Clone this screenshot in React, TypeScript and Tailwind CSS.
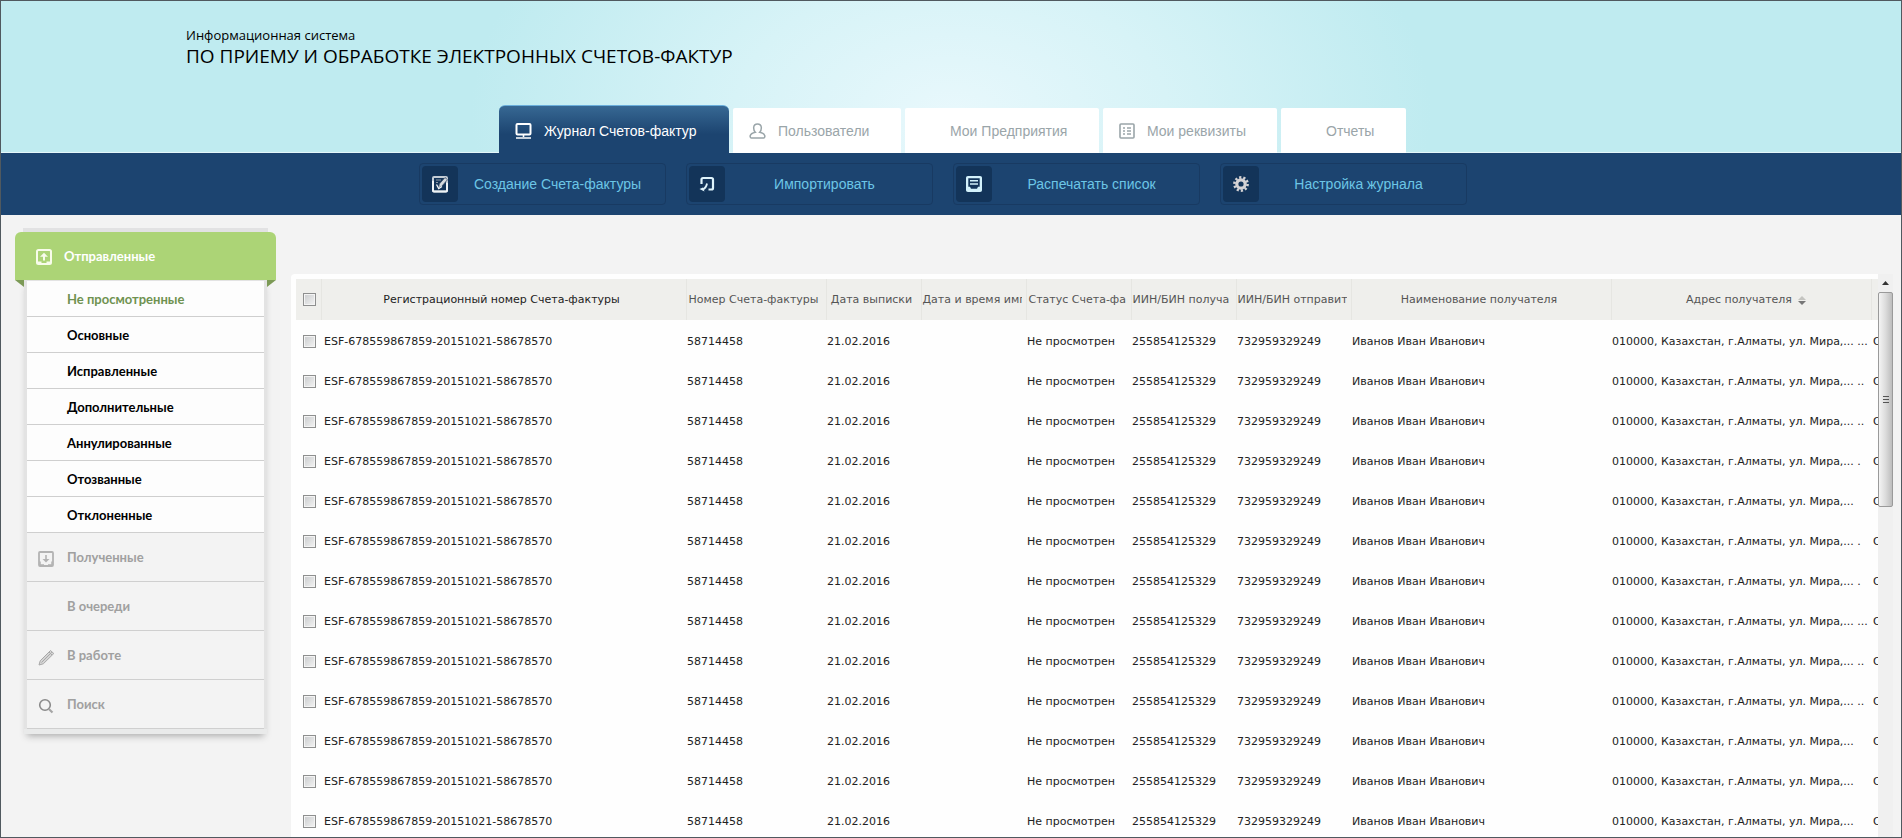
import type { ReactNode } from 'react'

interface Tab {
  label: string
  className: string
  icon?: ReactNode
}

interface Action {
  label: string
  icon: ReactNode
}

/* ---------- icons ---------- */

function MonitorIcon() {
  return (
    <svg viewBox="0 0 17 16" className="w-[17px] h-4 shrink-0" fill="none" stroke="currentColor">
      <rect x="1.5" y="1" width="14" height="10.5" rx="1" strokeWidth="2" />
      <path d="M8.5 12v2M1 15h15" strokeWidth="1.6" />
    </svg>
  )
}

function UserIcon() {
  return (
    <svg viewBox="0 0 17 16" className="w-[17px] h-4 shrink-0" fill="none" stroke="currentColor" strokeWidth="1.5">
      <path d="M6.3 9.2C5 8 4.6 6 4.7 4.3 4.9 2.2 6.4 1 8.500 1s3.600 1.200 3.800 3.300C12.400 6 12 8 10.700 9.200c2.300.5 4.500 1 5.100 3.500.2 1-.2 2.300-1.300 2.300H2.500c-1.100 0-1.500-1.300-1.300-2.300C1.800 10.200 4 9.700 6.300 9.200z" />
    </svg>
  )
}

function ListIcon() {
  return (
    <svg viewBox="0 0 16 16" className="size-4 shrink-0" fill="none" stroke="currentColor">
      <rect x="1" y="1" width="14" height="14" rx="1" strokeWidth="1.6" />
      <path d="M4 5h2M4 8h2M4 11h2M8 5h4M8 8h4M8 11h4" strokeWidth="1.7" />
    </svg>
  )
}

function EditIcon() {
  return (
    <svg viewBox="0 0 18 18" className="size-[18px]" fill="none">
      <rect x="2" y="2" width="14" height="14.500" rx="1" stroke="#c3ccd5" strokeWidth="2" />
      <path d="M2 6v9.500c0 .7.300 1 1 1h12c.7 0 1-.3 1-1V8" stroke="#eef3f6" strokeWidth="2" />
      <path d="M5 5h5M5 7.500h2" stroke="#8b98a6" />
      <path d="M7.500 13l.8-4L14 2.500l2.500 2.200L10.500 11.500z" fill="#d5dade" stroke="#3d5069" strokeWidth=".8" />
      <path d="M5.500 9.500l2.200 4 3.300-2" stroke="#eef3f6" strokeWidth="1.300" />
    </svg>
  )
}

function ImportIcon() {
  return (
    <svg viewBox="0 0 16 16" className="size-4" fill="none" stroke="#dff4fc" strokeWidth="2.200">
      <path d="M2.500 8V3.500Q2.500 2 4 2h8.500Q14 2 14 3.500V12q0 1.500-1.500 1.500H9.500" />
      <path d="M8 7.500C7.500 10.500 6 12.500 3.500 13.500" strokeWidth="1.800" />
      <path d="M0.500 13l3.500-1.500 1.500 4z" fill="#dff4fc" stroke="none" />
    </svg>
  )
}

function PrintIcon() {
  return (
    <svg viewBox="0 0 16 16" className="size-4">
      <path d="M2 0h12c1.300 0 2 .7 2 2v12c0 1.300-.7 2-2 2H2c-1.300 0-2-.7-2-2V2C0 .7.700 0 2 0z" fill="#d3f1fb" />
      <path d="M2.300 2.300h11.400v8.400h-1.700l-1 2h-6l-1-2H2.300z" fill="#133459" />
      <path d="M4 4.700h8M4 8h8" stroke="#d3f1fb" strokeWidth="1.600" />
    </svg>
  )
}

function GearIcon() {
  return (
    <svg viewBox="0 0 18 18" className="size-[18px]" fill="none" stroke="#d4d2d4">
      <circle cx="9" cy="9" r="4.200" strokeWidth="3.200" />
      <circle cx="9" cy="9" r="6.600" strokeWidth="2.600" strokeDasharray="2.200 1.947" />
    </svg>
  )
}

function OutboxIcon() {
  return (
    <svg viewBox="0 0 16 16" className="size-4" fill="none" stroke="#f8fceb">
      <rect x="1" y="1" width="14" height="14" rx="1.500" strokeWidth="2" />
      <path d="M8 11.500V6.500" strokeWidth="2" />
      <path d="M4 7.800L8 3.800l4 4z" fill="#f8fceb" stroke="none" />
      <path d="M2 13.500h3.500M10.500 13.500H14" strokeWidth="2" />
    </svg>
  )
}

function InboxIcon() {
  return (
    <svg viewBox="0 0 16 16" className="size-4" fill="none" stroke="#b3b3b3">
      <rect x="1" y="1" width="14" height="14" rx="1" strokeWidth="1.800" />
      <path d="M8 4v4.500" strokeWidth="1.600" />
      <path d="M4.500 8h7L8 11.500z" fill="#b3b3b3" stroke="none" />
      <path d="M2 10.500V14h4M14 10.500V14h-4" strokeWidth="1.500" />
    </svg>
  )
}

function PencilIcon() {
  return (
    <svg viewBox="0 0 17 17" className="size-[17px]" fill="none" stroke="#a8a8a8">
      <path d="M1 16l1.200-4.200L12.500 1.500 15.800 4.500 5.300 14.800z" fill="#d5d5d5" />
      <path d="M3.500 13.500L13.800 3.200" />
      <path d="M11 3l3 3" />
    </svg>
  )
}

function SearchIcon() {
  return (
    <svg viewBox="0 0 16 16" className="size-4" fill="none" stroke="#8a8a8a">
      <circle cx="7" cy="7" r="5.300" strokeWidth="1.600" />
      <path d="M10.800 11L14.500 14.500" stroke="#a5a5a5" strokeWidth="2.200" />
    </svg>
  )
}

/* ---------- data ---------- */

const tabs: Tab[] = [
  { label: 'Пользователи', className: 'w-[168px] pl-4', icon: <UserIcon /> },
  { label: 'Мои Предприятия', className: 'w-[194px] pl-[45px]' },
  { label: 'Мои реквизиты', className: 'w-[174px] pl-4', icon: <ListIcon /> },
  { label: 'Отчеты', className: 'w-[125px] pl-[45px]' },
]

const actions: Action[] = [
  { label: 'Создание Счета-фактуры', icon: <EditIcon /> },
  { label: 'Импортировать', icon: <ImportIcon /> },
  { label: 'Распечатать список', icon: <PrintIcon /> },
  { label: 'Настройка журнала', icon: <GearIcon /> },
]

const folders = [
  'Не просмотренные',
  'Основные',
  'Исправленные',
  'Дополнительные',
  'Аннулированные',
  'Отозванные',
  'Отклоненные',
]

const sections: { label: string; icon?: ReactNode }[] = [
  { label: 'Полученные', icon: <InboxIcon /> },
  { label: 'В очереди' },
  { label: 'В работе', icon: <PencilIcon /> },
  { label: 'Поиск', icon: <SearchIcon /> },
]

// long titles are stored already cut to their column
const columns = [
  { title: 'Регистрационный номер Счета-фактуры', className: '', head: 'text-center text-[#222]' },
  { title: 'Номер Счета-фактуры', className: 'w-[140px]', head: 'pl-0.5' },
  { title: 'Дата выписки', className: 'w-[95px]', head: 'text-center' },
  { title: 'Дата и время имп', className: 'w-[105px]', head: 'pl-px' },
  { title: 'Статус Счета-фа', className: 'w-[105px]', head: 'pl-0.5' },
  { title: 'ИИН/БИН получа', className: 'w-[105px]', head: 'pl-px' },
  { title: 'ИИН/БИН отправит', className: 'w-[115px]', head: 'pl-px' },
  { title: 'Наименование получателя', className: 'w-[260px]', head: 'text-center' },
  { title: 'Адрес получателя', className: 'w-[260px]', head: 'text-center pl-3.5' },
]

// what is left of the street line after the ellipsis, one per row
const tails = ['...', '..', '..', '.', '', '.', '.', '...', '..', '..', '', '', '']

/* ---------- parts ---------- */

function Header() {
  return (
    <header className="shrink-0 font-['Liberation_Sans',sans-serif] text-sm">
      <div className="h-[152px] flex flex-col justify-between bg-[#bfebf0] bg-[radial-gradient(ellipse_480px_300px_at_50%_75%,#e8f8fc_0%,#d7f3f7_45%,#bfebf0_100%)] border-b border-[#e4f7fa]">
        <div className="pl-[185px] pt-[25px] font-['Open_Sans','Noto_Sans',sans-serif] text-black">
          <p className="text-[13px] leading-[18px]">Информационная система</p>
          <h1 className="text-[19px] leading-6">ПО ПРИЕМУ И ОБРАБОТКЕ ЭЛЕКТРОННЫХ СЧЕТОВ-ФАКТУР</h1>
        </div>
        <nav className="flex justify-center items-end gap-1 pl-[3px] -mb-px">
          <a
            href="#journal"
            className="w-[230px] h-12 pl-4 pt-0.5 flex items-center gap-3 rounded-t-md border-t border-[#6aaedb] bg-linear-to-b from-[#376893] to-[#1c4470] to-60% text-white"
          >
            <MonitorIcon />
            Журнал Счетов-фактур
          </a>
          {tabs.map(tab => (
            <a
              key={tab.label}
              href="#tab"
              className={`${tab.className} h-[45px] flex items-center gap-3 rounded-t-xs bg-white text-[#9aa5a9]`}
            >
              {tab.icon}
              {tab.label}
            </a>
          ))}
        </nav>
      </div>

      <div className="h-[62px] flex items-center justify-center gap-5 pr-4 bg-[#1c4470]">
        {actions.map(action => (
          <button
            key={action.label}
            type="button"
            className="w-[247px] h-[42px] p-0.5 flex items-center rounded border border-[#183a62] text-[#6cc6e6]"
          >
            <span className="w-9 h-9 flex items-center justify-center rounded bg-[#133459]">{action.icon}</span>
            <span className="flex-1 text-center pr-1.5">{action.label}</span>
          </button>
        ))}
      </div>
    </header>
  )
}

function Sidebar() {
  return (
    <aside className="w-[261px] shrink-0 mt-[13px] font-['Lato','Open_Sans',sans-serif] text-[13px] font-bold">
      <div className="h-1 mx-2 bg-[#e2e2e3]" />
      <a
        href="#sent"
        className="h-12 pl-[21px] pt-0.5 flex items-center gap-3 rounded-t-md bg-[#acd476] text-white"
      >
        <OutboxIcon />
        Отправленные
      </a>
      <div className="flex items-start">
        <svg viewBox="0 0 9 7" className="w-[9px] h-[7px]">
          <path d="M0 0h9v7z" fill="#7c9a56" />
        </svg>
        <div className="flex-1 shadow-[0_5px_7px_-3px_#aaa]">
          <div className="px-[3px] pt-px bg-[#e3e3e3]">
            {folders.map((folder, i) => (
              <a
                key={folder}
                href="#folder"
                className={`h-9 pl-10 pt-0.5 flex items-center border-b border-[#cfcfcf] bg-[#fdfdfd] ${i === 0 ? 'text-[#6f9250]' : 'text-black'}`}
              >
                {folder}
              </a>
            ))}
            {sections.map(section => (
              <a
                key={section.label}
                href="#section"
                className="h-[49px] pl-[11px] pt-0.5 flex items-center gap-3 border-b border-[#cfcfcf] bg-[#f3f3f3] text-[#a0a0a0]"
              >
                <span className="w-[17px] pt-0.5">{section.icon}</span>
                {section.label}
              </a>
            ))}
          </div>
          <div className="h-[5px] bg-[#e9eaea]" />
        </div>
        <svg viewBox="0 0 9 7" className="w-[9px] h-[7px]">
          <path d="M0 0h9L0 7z" fill="#7c9a56" />
        </svg>
      </div>
    </aside>
  )
}

function Check({ label }: { label: string }) {
  return (
    <input
      type="checkbox"
      aria-label={label}
      className="block mx-auto size-[13px] appearance-none border border-[#8e8f8f] bg-linear-to-br from-[#c9cbcd] to-[#f4f4f4] shadow-[inset_0_0_0_1px_#f4f4f4]"
    />
  )
}

function SortIcon() {
  return (
    <svg viewBox="0 0 8 9" className="inline w-2 h-[9px] ml-1.5">
      <path d="M0 4l4-4 4 4z" fill="#c4c4c0" />
      <path d="M0 5h8L4 9z" fill="#777" />
    </svg>
  )
}

function Journal() {
  return (
    <main className="flex-1 min-w-0 mt-[59px] pl-[5px] pt-[5px] overflow-hidden bg-[#fefefe] rounded-tl">
      <table className="w-full table-fixed border-collapse font-['DejaVu_Sans',sans-serif] text-[11px] whitespace-nowrap text-[#222]">
        <thead>
          <tr className="h-[42px] bg-[#efefec] border-b-2 border-[#fefefe] text-[#555]">
            <th className="w-[25px] p-0 pl-0.5 border-r border-[#e6e6e2]">
              <Check label="Выбрать все" />
            </th>
            {columns.map(col => (
              <th
                key={col.title}
                className={`${col.className} p-0 pt-0.5 border-r border-[#e6e6e2] font-normal text-left`}
              >
                <div className={`${col.head} mr-1 overflow-hidden`}>
                  {col.title}
                  {col.title === 'Адрес получателя' && <SortIcon />}
                </div>
              </th>
            ))}
            <th className="w-[7px] p-0" />
          </tr>
        </thead>
        <tbody>
          {tails.map((tail, i) => (
            <tr key={i} className="h-10">
              <td className="p-0 pl-0.5">
                <Check label={`Выбрать строку ${i + 1}`} />
              </td>
              <td className="p-0 pt-0.5 pl-[3px]">ESF-678559867859-20151021-58678570</td>
              <td className="p-0 pt-0.5 pl-px">58714458</td>
              <td className="p-0 pt-0.5 pl-px">21.02.2016</td>
              <td className="p-0" />
              <td className="p-0 pt-0.5 pl-px">Не просмотрен</td>
              <td className="p-0 pt-0.5 pl-px">255854125329</td>
              <td className="p-0 pt-0.5 pl-px">732959329249</td>
              <td className="p-0 pt-0.5 pl-px">Иванов Иван Иванович</td>
              <td className="p-0 pt-0.5 pl-px">010000, Казахстан, г.Алматы, ул. Мира,... {tail}</td>
              <td className="p-0 pt-0.5 pl-0.5">
                <div className="overflow-hidden">О</div>
              </td>
            </tr>
          ))}
        </tbody>
      </table>
    </main>
  )
}

function Scrollbar() {
  return (
    <div className="w-[15px] shrink-0 mt-[59px] flex flex-col items-center bg-[#f0f0f0]">
      <svg viewBox="0 0 7 4" className="w-[7px] h-1 my-[7px]">
        <path d="M0 4l3.500-4L7 4z" fill="#333" />
      </svg>
      <div className="w-full h-[215px] flex flex-col items-center justify-center gap-0.5 rounded-xs border border-[#9a9a9a] bg-linear-to-r from-[#f4f4f4] via-[#dcdcdc] to-[#bdbdbd]">
        <span className="w-1.5 h-px bg-[#555]" />
        <span className="w-1.5 h-px bg-[#555]" />
        <span className="w-1.5 h-px bg-[#555]" />
      </div>
    </div>
  )
}

export default function App() {
  return (
    <div className="h-screen flex flex-col overflow-hidden border border-[#50595f] bg-[#f3f3f3]">
      <Header />
      <div className="flex-1 min-h-0 flex pl-3.5 pr-2">
        <Sidebar />
        <div className="w-[15px] shrink-0" />
        <Journal />
        <Scrollbar />
      </div>
    </div>
  )
}
